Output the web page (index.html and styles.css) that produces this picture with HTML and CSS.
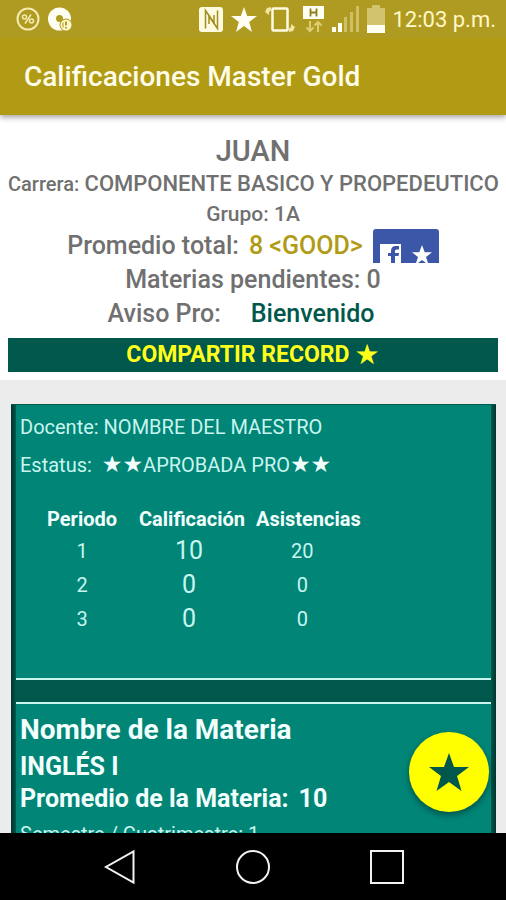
FILE: index.html
```html
<!DOCTYPE html>
<html lang="es">
<head>
<meta charset="utf-8">
<meta name="viewport" content="width=device-width, initial-scale=1">
<title>Calificaciones Master Gold</title>
<link rel="stylesheet" href="styles.css">
</head>
<body>
<header class="top">
  <div class="status">
    <svg class="icon" width="24" height="24" viewBox="0 0 24 24" fill="none" stroke="#f3ebb0" aria-hidden="true">
      <circle cx="12" cy="12" r="10.500" stroke-width="2"/>
      <path d="M15 7.500L9 16.500" stroke-width="1.500"/>
      <circle cx="8.500" cy="10" r="2" stroke-width="1.500"/>
      <circle cx="15.500" cy="14" r="2" stroke-width="1.500"/>
    </svg>
    <svg class="icon" width="24" height="24" viewBox="0 0 24 24" aria-hidden="true">
      <circle cx="11.500" cy="12" r="11.500" fill="#fffef2"/>
      <circle cx="11.500" cy="11.500" r="3.500" fill="#b09c20"/>
      <circle cx="18" cy="18" r="6.500" fill="#b09c20"/>
      <circle cx="18" cy="18" r="5.500" fill="#fff8c8"/>
      <path d="M18 14.500v4M18 20v1.500" stroke="#a8941c" stroke-width="1.800"/>
      <path d="M15 15.500v5" stroke="#a8941c" stroke-width="1"/>
    </svg>
    <span class="spacer"></span>
    <svg class="icon" width="24" height="25" viewBox="0 0 24 25" aria-hidden="true">
      <rect width="24" height="25" rx="3" fill="#fffbe0"/>
      <path d="M6.500 21.500V3.500L15 16V8" fill="none" stroke="#a08d1c" stroke-width="1.500"/>
      <path d="M10 17V9L18.500 21.500V3.500" fill="none" stroke="#a08d1c" stroke-width="1.500"/>
    </svg>
    <svg class="icon" width="26" height="25" viewBox="0 0 26 25" aria-hidden="true">
      <path d="M13 0l3.200 9H26l-7.800 5.900L21 25l-8-6-8 6 2.800-10.100L0 9h9.800z" fill="#fffef2"/>
    </svg>
    <svg class="icon" width="30" height="28" viewBox="0 0 30 28" aria-hidden="true">
      <rect x="7.500" y="3.500" width="15" height="22" rx="1" fill="none" stroke="#fffbe0" stroke-width="2.500"/>
      <path d="M6 2v3.500L4 7v3L0 7l2-4z" fill="#f0e6a0"/>
      <path d="M24 27v-3.500l2-1.500v-3l4 3-2 4z" fill="#f0e6a0"/>
    </svg>
    <svg class="icon" width="21" height="27" viewBox="0 0 21 27" aria-hidden="true">
      <rect width="21" height="13" fill="#fffef2"/>
      <path d="M7.500 2.500v8M13.500 2.500v8M7.500 6.500h6" stroke="#8e7d1c" stroke-width="1.800"/>
      <path d="M7 15v10M3.500 21.500L7 25l3.500-3.500M15 26V16M11.500 19.500L15 16l3.500 3.500" fill="none" stroke="#dccd72" stroke-width="2"/>
    </svg>
    <svg class="icon" width="27" height="26" viewBox="0 0 27 26" aria-hidden="true">
      <path d="M0 21h4v5H0zM6 17h4v9H6z" fill="#fffef2"/>
      <path d="M12 11h3v15h-3zM18 6h3v20h-3zM24 0h3v26h-3z" fill="#cfc067"/>
    </svg>
    <svg class="icon" width="18" height="28" viewBox="0 0 18 28" aria-hidden="true">
      <path d="M5 0h8v3h5v17H0V3h5z" fill="#d2c46f"/>
      <path d="M0 20h18v8H0z" fill="#fffef2"/>
    </svg>
    <time class="clock">12:03 p.m.</time>
  </div>
  <h1 class="title">Calificaciones Master Gold</h1>
</header>

<main class="content">
  <section class="summary">
    <h2 class="name">JUAN</h2>
    <p class="row row-small"><span class="label-small">Carrera:</span> <span class="career">COMPONENTE BASICO Y PROPEDEUTICO</span></p>
    <p class="row row-small">Grupo: 1A</p>
    <div class="row average">
      <span>Promedio total:</span>
      <strong class="gold">8 &lt;GOOD&gt;</strong>
      <button class="facebook" type="button" aria-label="Compartir en Facebook">
        <svg width="66" height="34" viewBox="0 0 66 34" aria-hidden="true">
          <path d="M7 15h21v19H7z" fill="#fff"/>
          <path d="M18 34v-7h-3v-3h3v-2q0-5 5-5h3v3.500h-2.500q-1.500 0-1.500 1.500v2h4l-.5 3H22v7z" fill="#3d57a8"/>
          <path d="M49 16l2.700 7.200H59l-6 4.800 2 6h-2l-4-3-4 3h-2l2-6-6-4.800h7.300z" fill="#fff"/>
        </svg>
      </button>
    </div>
    <p class="row">Materias pendientes: 0</p>
    <p class="row notice"><span>Aviso Pro:</span> <strong class="green">Bienvenido</strong></p>
    <button class="share" type="button"><span>COMPARTIR RECORD</span> <span class="star">★</span></button>
  </section>

  <section class="list">
    <article class="subject">
      <p class="line">Docente: NOMBRE DEL MAESTRO</p>
      <p class="line state"><span>Estatus:</span> <span><span class="star">★★</span>APROBADA PRO<span class="star">★★</span></span></p>
      <table class="grades">
        <thead><tr><th>Periodo</th><th>Calificación</th><th>Asistencias</th></tr></thead>
        <tbody>
          <tr><td>1</td><td class="grade">10</td><td class="attendance">20</td></tr>
          <tr><td>2</td><td class="grade">0</td><td class="attendance">0</td></tr>
          <tr><td>3</td><td class="grade">0</td><td class="attendance">0</td></tr>
        </tbody>
      </table>
    </article>
    <article class="subject">
      <h3 class="subject-title">Nombre de la Materia</h3>
      <p class="subject-name">INGLÉS I</p>
      <p class="subject-average"><span>Promedio de la Materia:</span> <span>10</span></p>
      <p class="term">Semestre / Cuatrimestre: 1</p>
    </article>
  </section>
  <button class="fab" type="button" aria-label="Favoritos">
    <svg width="40" height="38" viewBox="0 0 40 38" aria-hidden="true">
      <path d="M20 0l5 14h15L28 23l4.500 15L20 29 7.500 38 12 23 0 14h15z" fill="#00574b"/>
    </svg>
  </button>
</main>

<nav class="navbar" aria-label="Sistema">
  <button class="nav" type="button" aria-label="Atrás">
    <svg width="36" height="36" viewBox="0 0 36 36"><path d="M32.500 2.500v31L5 18z"/></svg>
  </button>
  <button class="nav" type="button" aria-label="Inicio">
    <svg width="36" height="36" viewBox="0 0 36 36"><circle cx="18" cy="18" r="16"/></svg>
  </button>
  <button class="nav" type="button" aria-label="Recientes">
    <svg width="36" height="36" viewBox="0 0 36 36"><path d="M2 2h32v32H2z"/></svg>
  </button>
</nav>
</body>
</html>
```

FILE: styles.css
```css
* { box-sizing: border-box; }

body {
  margin: 0;
  height: 100vh;
  display: flex;
  flex-direction: column;
  overflow: hidden;
  font-family: Roboto, "Liberation Sans", sans-serif;
  background: #ececec;
}

h1, h2, h3, p { margin: 0; }
button { font-family: inherit; border: 0; padding: 0; }

.top {
  position: relative;
  z-index: 1;
  background: #b19a14;
  color: #fffde8;
  box-shadow: 0 2px 6px rgba(0, 0, 0, 0.4);
}

.status {
  display: flex;
  align-items: center;
  gap: 8px;
  height: 38px;
  padding: 0 10px 0 16px;
  background: #b09b22;
}

.icon { flex: none; }
.spacer { flex: 1; }
.clock { font-size: 22px; color: #fff8c8; }

.title {
  padding: 0 24px;
  font-size: 28px;
  font-weight: 500;
  line-height: 77px;
}

.content {
  position: relative;
  flex: 1;
  min-height: 0;
  display: flex;
  flex-direction: column;
}

.summary {
  padding: 18px 8px 8px;
  background: #fff;
  color: #707070;
  text-align: center;
}

.name { font-size: 29px; font-weight: 500; line-height: 36px; }

.row {
  font-size: 25px;
  font-weight: 500;
  line-height: 34px;
  white-space: nowrap;
}

.row-small { font-size: 21px; line-height: 30px; }
.label-small { font-size: 20px; }
.career { font-size: 22px; line-height: 1; }

.average { display: flex; justify-content: center; gap: 10px; }
.gold { color: #b19a14; font-weight: 500; }
.green { color: #00574b; font-weight: 500; }
.notice {
  display: flex;
  justify-content: center;
  gap: 30px;
  padding-right: 24px;
}

.facebook {
  height: 34px;
  border-radius: 3px 3px 0 0;
  background: #3d57a8;
}
.facebook svg { display: block; }

.star { font-family: "DejaVu Sans", sans-serif; line-height: 1; }

.share {
  display: flex;
  justify-content: center;
  align-items: center;
  gap: 5px;
  width: 100%;
  height: 34px;
  margin-top: 7px;
  background: #00574b;
  color: #ffff1a;
  font-size: 23px;
  font-weight: 700;
  line-height: 34px;
}
.share .star { font-size: 28px; }

.list {
  flex: 1;
  min-height: 0;
  overflow: hidden;
  margin: 24px 10px 0 11px;
  padding: 0 5px;
  border-top: 1px solid #00574b;
  background: linear-gradient(90deg, #00352d, #00574b 5px, #00574b calc(100% - 5px), #00352d);
}

.subject {
  padding: 3px 4px;
  background: #008577;
  color: #c9f5ef;
  font-size: 20px;
}

.subject + .subject {
  margin-top: 22px;
  border-top: 2px solid #c9f5ef;
}

.subject:first-child {
  height: 275px;
  border-bottom: 2px solid #c9f5ef;
}

.line { line-height: 38px; }
.state { display: flex; gap: 10px; }
.state .star { font-size: 23px; color: #f2fffd; }

.grades {
  margin: 20px 0 0 16px;
  border-collapse: collapse;
  text-align: center;
}

.grades th { padding: 0 11px; line-height: 30px; color: #f2fffd; font-weight: 700; }
.grades th:last-child { padding: 0; }
.grades td { padding: 0; line-height: 34px; }
.grades .grade { padding-right: 6px; font-size: 25px; }
.grades .attendance { padding-right: 12px; }

.subject-title, .subject-name, .subject-average { color: #f2fffd; font-weight: 700; }
.subject-title { font-size: 28px; line-height: 46px; }
.subject-name { font-size: 25px; line-height: 28px; }
.subject-average { display: flex; gap: 10px; font-size: 25px; line-height: 36px; }
.term { font-size: 20px; line-height: 34px; }

.fab {
  position: absolute;
  right: 17px;
  bottom: 21px;
  width: 80px;
  height: 80px;
  display: grid;
  place-items: center;
  border-radius: 50%;
  background: #ffff00;
  box-shadow: 0 3px 6px rgba(0, 0, 0, 0.4);
}

.navbar {
  display: flex;
  justify-content: center;
  gap: 98px;
  height: 67px;
  background: #000;
}

.nav { display: grid; place-items: center; background: none; }
.nav svg { fill: none; stroke: #f2f2f2; stroke-width: 2; }
```
